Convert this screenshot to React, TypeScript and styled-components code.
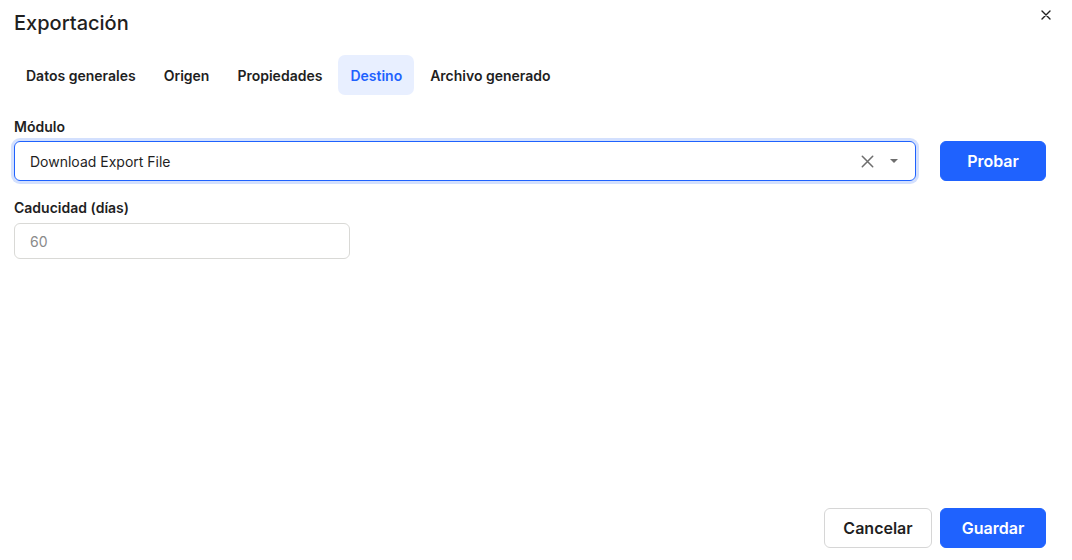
import React, { useState } from 'react';
import styled, { createGlobalStyle } from 'styled-components';

const GlobalStyle = createGlobalStyle`
  html, body {
    margin: 0;
    padding: 0;
    background: #ffffff;
  }
  body {
    font-family: Inter, "Noto Sans", "Liberation Sans", sans-serif;
    color: #1f1f1f;
  }
  * {
    box-sizing: border-box;
  }
`;

const Dialog = styled.div`
  width: 1072px;
  height: 560px;
  display: flex;
  flex-direction: column;
  padding: 0 26px 12px 14px;
  background: #fff;
`;

const Header = styled.div`
  display: flex;
  justify-content: space-between;
  align-items: flex-start;
  height: 44px;
`;

const Title = styled.h2`
  margin: 0;
  padding-top: 1px;
  font-size: 20px;
  line-height: 44px;
  font-weight: 550;
  color: #1f1f1f;
`;

const CloseButton = styled.button`
  margin: 6px -9px 0 0;
  width: 18px;
  height: 18px;
  padding: 0;
  border: none;
  background: transparent;
  display: flex;
  align-items: center;
  justify-content: center;
  color: #1f1f1f;
  cursor: pointer;
`;

const Tabs = styled.div`
  display: flex;
  gap: 4px;
  margin-top: 11px;
`;

const Tab = styled.button<{ $active?: boolean }>`
  height: 40px;
  padding: 0 12px;
  border: none;
  border-radius: 7px;
  font-family: inherit;
  font-size: 14px;
  font-weight: 600;
  background: ${(p) => (p.$active ? '#e8efff' : 'transparent')};
  color: ${(p) => (p.$active ? '#1f62fe' : '#1f1f1f')};
  cursor: pointer;
`;

const Field = styled.div<{ $top: number }>`
  display: flex;
  flex-direction: column;
  margin-top: ${(p) => p.$top}px;
`;

const Label = styled.label<{ $gap: number }>`
  font-size: 14px;
  line-height: 20px;
  font-weight: 600;
  color: #1f1f1f;
  margin-bottom: ${(p) => p.$gap}px;
`;

const Row = styled.div`
  display: flex;
  align-items: center;
  gap: 24px;
`;

const SelectBox = styled.div`
  flex: 1;
  height: 40px;
  display: flex;
  align-items: center;
  padding: 0 17px 0 15px;
  border: 1px solid #1f62fe;
  border-radius: 6px;
  box-shadow: 0 0 0 3px #d3e0fe;
  font-size: 14px;
  color: #1f1f1f;
`;

const SelectValue = styled.span`
  flex: 1;
`;

const IconButton = styled.span`
  display: flex;
  align-items: center;
  justify-content: center;
  color: #6e6e6e;
`;

const Caret = styled.span`
  margin-left: 16px;
  width: 0;
  height: 0;
  border-left: 4.5px solid transparent;
  border-right: 4.5px solid transparent;
  border-top: 4.5px solid #6e6e6e;
`;

const Button = styled.button<{ $primary?: boolean }>`
  height: 40px;
  width: ${(p) => (p.$primary ? '106px' : '108px')};
  border-radius: 6px;
  font-family: inherit;
  font-size: 16px;
  font-weight: 600;
  border: 1px solid ${(p) => (p.$primary ? '#1f62fe' : '#d6d6d6')};
  background: ${(p) => (p.$primary ? '#1f62fe' : '#fff')};
  color: ${(p) => (p.$primary ? '#fff' : '#1f1f1f')};
  cursor: pointer;
`;

const Input = styled.input`
  width: 336px;
  height: 36px;
  padding: 0 15px;
  border: 1px solid #d9d9d6;
  border-radius: 6px;
  font-family: inherit;
  font-size: 14px;
  color: #1f1f1f;
  outline: none;
  &::placeholder {
    color: #8a8a8a;
  }
`;

const Footer = styled.div`
  margin-top: auto;
  display: flex;
  justify-content: flex-end;
  gap: 8px;
`;

const XIcon = ({ size, stroke }: { size: number; stroke: number }) => (
  <svg width={size} height={size} viewBox="0 0 10 10" fill="none">
    <path d="M1 1L9 9M9 1L1 9" stroke="currentColor" strokeWidth={stroke} strokeLinecap="round" />
  </svg>
);

const tabs = ['Datos generales', 'Origen', 'Propiedades', 'Destino', 'Archivo generado'];

const App = () => {
  const [active, setActive] = useState('Destino');

  return (
    <>
      <GlobalStyle />
      <Dialog>
        <Header>
          <Title>Exportación</Title>
          <CloseButton>
            <XIcon size={10} stroke={1.4} />
          </CloseButton>
        </Header>
        <Tabs>
          {tabs.map((t) => (
            <Tab key={t} $active={t === active} onClick={() => setActive(t)}>
              {t}
            </Tab>
          ))}
        </Tabs>
        <Field $top={22}>
          <Label $gap={4}>Módulo</Label>
          <Row>
            <SelectBox>
              <SelectValue>Download Export File</SelectValue>
              <IconButton>
                <XIcon size={13} stroke={1.2} />
              </IconButton>
              <Caret />
            </SelectBox>
            <Button $primary>Probar</Button>
          </Row>
        </Field>
        <Field $top={17}>
          <Label $gap={5}>Caducidad (días)</Label>
          <Input placeholder="60" />
        </Field>
        <Footer>
          <Button>Cancelar</Button>
          <Button $primary>Guardar</Button>
        </Footer>
      </Dialog>
    </>
  );
};

export default App;
